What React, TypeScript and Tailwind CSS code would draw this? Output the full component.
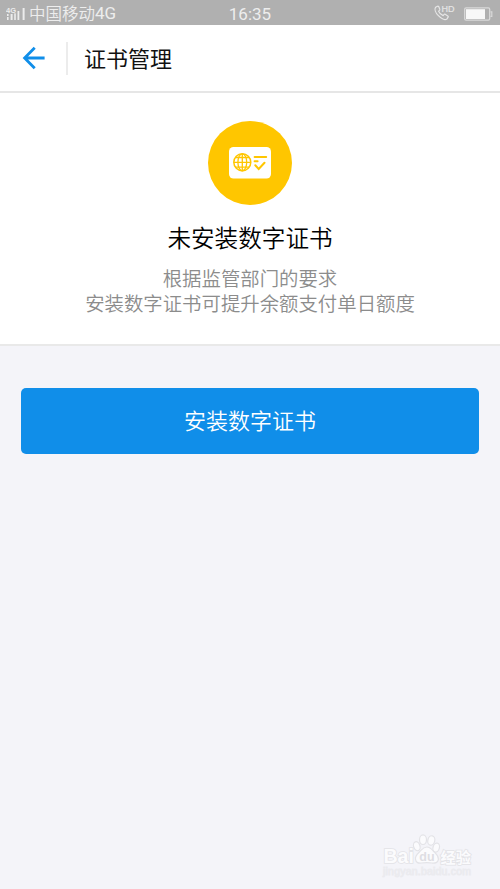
import React from 'react';

const SignalIcon: React.FC = () => (
  <svg width="20" height="16" viewBox="0 0 20 16" fill="#ececec">
    <text x="0" y="6.6" fontSize="7.5" fontWeight="700" fontFamily="Liberation Sans, sans-serif">4G</text>
    <rect x="1" y="8" width="1.6" height="2" />
    <rect x="1" y="11" width="1.6" height="3" />
    <rect x="4.6" y="8" width="2" height="6" />
    <rect x="8.2" y="7.3" width="1.6" height="6.7" />
    <rect x="11.5" y="5" width="1.8" height="9" />
    <rect x="16.6" y="2" width="2" height="12" />
  </svg>
);

const CallHdIcon: React.FC = () => (
  <svg width="22" height="17" viewBox="0 0 22 17" fill="none" stroke="#e6e6e6">
    <path
      strokeWidth="1.2"
      strokeLinejoin="round"
      d="M3.6 2.2 1.6 3.3C.4 5 1.4 8.6 4.4 11.7c3.2 3.2 6.8 4.4 8.6 3.2l1.1-1.8c.3-.5.1-.9-.3-1.2l-2.6-1.6c-.5-.3-1-.1-1.3.3l-.8 1c-2-.8-3.7-2.5-4.5-4.4l.9-.8c.5-.4.5-.8.3-1.2L4.7 2.6c-.3-.4-.7-.6-1.1-.4Z"
    />
    <text x="7.6" y="8.4" fontSize="9" fill="#e6e6e6" strokeWidth=".2" fontFamily="Liberation Sans, sans-serif">HD</text>
  </svg>
);

const BatteryIcon: React.FC = () => (
  <svg width="29" height="14" viewBox="0 0 29 14" fill="none">
    <rect x=".7" y=".9" width="25" height="12.2" rx="1.4" stroke="#d9d9d9" strokeWidth="1.3" />
    <rect x="2" y="2.2" width="19" height="9.8" fill="#f8f8f8" />
    <path d="M26.5 4.8h1.3v4.6h-1.3" stroke="#d9d9d9" strokeWidth="1.2" />
  </svg>
);

const StatusBar: React.FC = () => (
  <div className="grid h-[25px] grid-cols-3 items-center bg-[#b0b0b0] text-[16.5px] leading-[25px] text-[#ededed]">
    <div className="flex items-center pl-[6px]">
      <SignalIcon />
      <span className="ml-[3px] flex whitespace-nowrap font-[350]">
        中国移动<span className="font-[Roboto] text-[17px] font-normal">4G</span>
      </span>
    </div>
    <span className="pt-[2px] text-center font-[Roboto] text-[17px] font-normal">16:35</span>
    <div className="flex items-center justify-end gap-[8px] pr-[7px]">
      <div className="-mt-[2px]">
        <CallHdIcon />
      </div>
      <BatteryIcon />
    </div>
  </div>
);

const CertificateIcon: React.FC = () => (
  <div className="flex size-[84px] items-center justify-center rounded-full bg-[#ffc600]">
    <svg width="42" height="32" viewBox="0 0 42 32" fill="none" stroke="#ffc600">
      <rect width="42" height="31.5" rx="4.5" fill="#fff" stroke="none" />
      <g strokeWidth="1.3">
        <circle cx="13.3" cy="15.3" r="8.5" strokeWidth="1.5" />
        <ellipse cx="13.3" cy="15.3" rx="4.4" ry="8.5" />
        <path d="M13.3 6.8v17M4.8 15.3h17M6.3 10.5h14M6.3 20.1h14" />
      </g>
      <g strokeWidth="2" strokeLinecap="round">
        <path d="M25.6 10h11.6M25.6 14.3h3" />
        <path d="m26.3 18.3 3.4 3.7 5.8-6.2" />
      </g>
    </svg>
  </div>
);

const Watermark: React.FC = () => (
  <svg className="absolute bottom-[4px] left-[380px]" width="96" height="54" viewBox="0 0 96 54" fill="#fbfbfd" stroke="#e3e3e7" strokeWidth="1.6">
    <g fontFamily="Liberation Sans, Noto Sans CJK SC, sans-serif">
      <g strokeWidth="1.2">
        <ellipse cx="43" cy="8.7" rx="3.5" ry="4.8" />
        <ellipse cx="51.3" cy="9.5" rx="3.5" ry="4.8" transform="rotate(12 51.3 9.5)" />
        <ellipse cx="36.8" cy="15.2" rx="3.2" ry="4.6" transform="rotate(-18 36.8 15.2)" />
        <ellipse cx="56.2" cy="16.6" rx="3.2" ry="4.6" transform="rotate(15 56.2 16.6)" />
        <path d="M46.8 16c-3.8 0-5.2 3-7.6 5.2-2.6 2.2-4.3 3.9-3.7 7.2.5 3.3 3 4.1 6 3.6 3.6-.5 6.8-.5 10.2 0 3.4.6 6.3-.4 6.7-3.6.4-3.3-1.4-4.6-3.8-7-2.3-2.3-3.9-5.4-7.8-5.4Z" />
      </g>
      <text x="3.5" y="31.8" fontSize="19.5" fontWeight="700" paintOrder="stroke">Bai</text>
      <text x="39.3" y="30.4" fontSize="12.5" fontWeight="700" fill="#dedee3" stroke="none">du</text>
      <text x="60.5" y="31.5" fontSize="15.2" fontWeight="700" paintOrder="stroke">经验</text>
      <text x="3" y="43.5" fontSize="10.5" strokeWidth=".8" stroke="#ebebef" fill="#ebebef" textLength="88">jingyan.baidu.com</text>
    </g>
  </svg>
);

const App: React.FC = () => {
  return (
    <div className="relative h-[889px] w-[500px] overflow-hidden bg-[#f4f4f9] font-['Noto_Sans_CJK_SC',sans-serif]">
      <StatusBar />

      {/* Header */}
      <header className="flex h-[68px] items-center border-b-2 border-[#e6e6e6] bg-white">
        <svg className="ml-[22px]" width="24" height="24" viewBox="0 0 24 24" fill="none" stroke="#108ee9" strokeWidth="2.8">
          <path d="M2.6 12h20M12.7 1.8 2.6 12l10.1 10.2" />
        </svg>
        <div className="ml-[20px] h-[33px] w-[2px] bg-[#ececec]" />
        <h1 className="ml-[16px] pb-[3px] text-[22px] leading-none text-[#111]">证书管理</h1>
      </header>

      {/* Certificate state */}
      <section className="flex h-[253px] flex-col items-center border-b-2 border-[#e9e9e9] bg-white pt-[28px]">
        <CertificateIcon />
        <h2 className="mt-[15px] text-[23.6px] leading-[34px] font-[350] text-black">未安装数字证书</h2>
        <p className="mt-[11px] text-center text-[19.4px] leading-[25px] font-[350] text-[#8c8c8c]">
          根据监管部门的要求
          <br />
          安装数字证书可提升余额支付单日额度
        </p>
      </section>

      <div className="px-[21px] pt-[42px]">
        <button className="h-[66px] w-full rounded-[5px] bg-[#108ee9] pb-[4px] text-[22px] font-[350] text-white">
          安装数字证书
        </button>
      </div>

      <Watermark />
    </div>
  );
};

export default App;
